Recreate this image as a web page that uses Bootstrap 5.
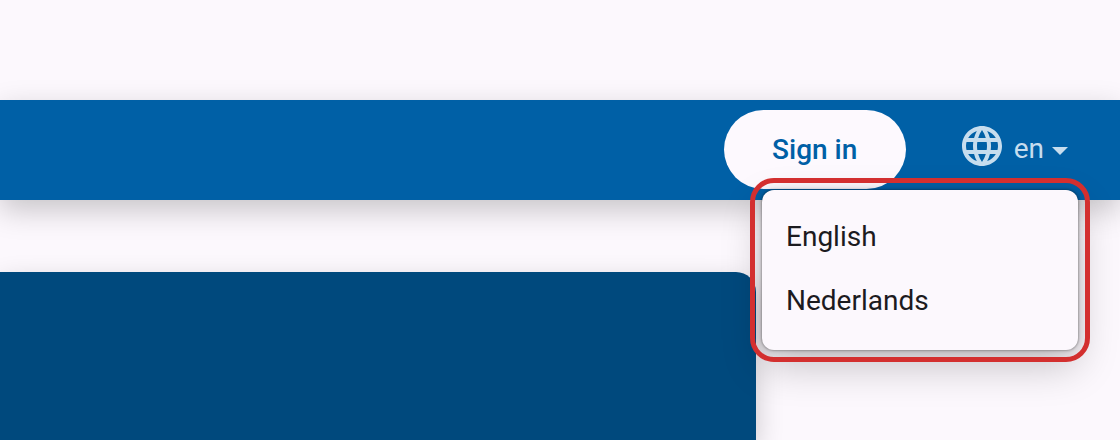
<!DOCTYPE html>
<html lang="en">
<head>
<meta charset="utf-8">
<title>Language menu</title>
<link href="https://cdn.jsdelivr.net/npm/bootstrap@5.3.0/dist/css/bootstrap.min.css" rel="stylesheet">
<style>
html,body{height:440px;overflow:hidden}
body{background:#fcf8fd;font-family:Roboto,"Liberation Sans",sans-serif;padding-top:100px}
.topbar{height:100px;background:#0060a6;box-shadow:0 10px 28px rgba(0,0,0,.21);position:relative;z-index:2;padding-right:52px;padding-top:10px}
.signbtn{width:182px;height:79px;border:0;border-radius:40px;background:#fdf9fe;color:#0060a6;font-size:28px;font-weight:500;font-family:Roboto,sans-serif;padding:0}
.langbtn{color:#c6ddee;font-size:28px;margin-left:52px;gap:8px;height:79px;background:none;border:0;padding:0}
.globeicon{margin-top:-7px}
.langcode{margin-top:-2px}
.caretglyph{width:0;height:0;border-left:8px solid transparent;border-right:8px solid transparent;border-top:8px solid #c6ddee;margin-top:2px}
.bodyarea{margin-top:72px;width:756px;height:168px;background:#00497d;border-top-right-radius:20px;box-shadow:0 10px 28px rgba(0,0,0,.2)}
.langmenu{position:absolute;z-index:3;top:190px;left:762px;width:316px;height:160px;background:#fcf8fd;border-radius:12px;padding:14px 0;box-shadow:0 0 2px 1px rgba(0,0,0,.24),0 1px 8px 2px rgba(0,0,0,.1),0 16px 40px rgba(0,0,0,.22)}
.langitem{display:block;height:64px;line-height:65px;padding:0 24px;font-size:28px;color:#1c1b1f;text-decoration:none}
.callout{position:absolute;z-index:4;top:178px;left:750px;width:340px;height:184px;border:5px solid #d32f2f;border-radius:24px;pointer-events:none}
</style>
</head>
<body>
<header class="topbar d-flex justify-content-end align-items-start">
<button class="signbtn" type="button">Sign in</button>
<button class="langbtn d-flex align-items-center" type="button">
<svg class="globeicon" width="48" height="48" viewBox="0 0 24 24" fill="#c6ddee" aria-hidden="true">
<path d="M11.99 2C6.47 2 2 6.48 2 12s4.47 10 9.99 10C17.52 22 22 17.52 22 12S17.52 2 11.99 2zm6.93 6h-2.95c-.32-1.25-.78-2.45-1.38-3.56 1.84.63 3.37 1.91 4.33 3.56zM12 4.04c.83 1.2 1.48 2.53 1.91 3.96h-3.82c.43-1.43 1.08-2.76 1.91-3.96zM4.26 14C4.1 13.36 4 12.69 4 12s.1-1.36.26-2h3.38c-.08.66-.14 1.32-.14 2 0 .68.06 1.34.14 2H4.26zm.82 2h2.95c.32 1.25.78 2.45 1.38 3.56-1.84-.63-3.37-1.9-4.33-3.56zm2.95-8H5.08c.96-1.66 2.49-2.93 4.33-3.56C8.81 5.55 8.35 6.75 8.03 8zM12 19.96c-.83-1.2-1.48-2.53-1.91-3.96h3.82c-.43 1.43-1.08 2.76-1.91 3.96zM14.34 14H9.66c-.09-.66-.16-1.32-.16-2 0-.68.07-1.35.16-2h4.68c.09.65.16 1.32.16 2 0 .68-.07 1.34-.16 2zm.25 5.56c.6-1.11 1.06-2.31 1.38-3.56h2.95c-.96 1.65-2.49 2.93-4.33 3.56zM16.36 14c.08-.66.14-1.32.14-2 0-.68-.06-1.34-.14-2h3.38c.16.64.26 1.31.26 2s-.1 1.36-.26 2h-3.38z"/>
</svg>
<span class="langcode">en</span>
<span class="caretglyph"></span>
</button>
</header>
<main class="bodyarea"></main>
<nav class="langmenu">
<a class="langitem" href="#">English</a>
<a class="langitem" href="#">Nederlands</a>
</nav>
<div class="callout"></div>
<script src="https://cdn.jsdelivr.net/npm/bootstrap@5.3.0/dist/js/bootstrap.bundle.min.js"></script>
</body>
</html>
